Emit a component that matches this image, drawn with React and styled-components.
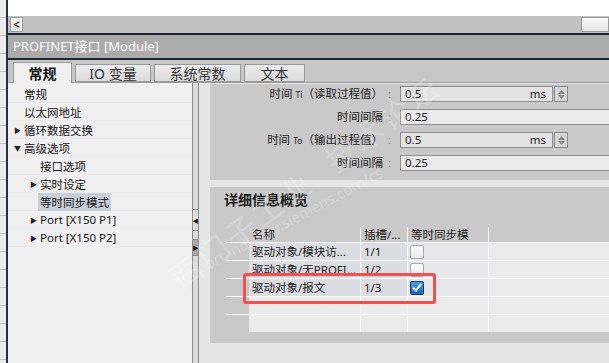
import React from 'react';
import styled, { createGlobalStyle } from 'styled-components';

const FONT = `"Noto Sans", "Noto Sans CJK SC", sans-serif`;

const Global = createGlobalStyle`
  html, body { margin: 0; padding: 0; background: #fff; }
  body { font-family: ${FONT}; }
  * { box-sizing: border-box; }
`;

const Screen = styled.div`
  position: relative;
  width: 609px;
  height: 363px;
  overflow: hidden;
  display: flex;
  font-family: ${FONT};
  color: #151515;
`;

const LeftEdge = styled.div`
  flex: none;
  width: 8px;
  background: repeating-linear-gradient(to bottom, #ececec 0 17px, #c4c4c4 17px 18px);
  border-right: 2px solid #2a2e3a;
`;

const Main = styled.div`
  flex: 1;
  min-width: 0;
  display: flex;
  flex-direction: column;
`;

const TopWhite = styled.div`
  height: 16px;
  background: #fff;
`;

const Toolbar = styled.div`
  height: 17px;
  background: #c2c2c2;
  display: flex;
  align-items: center;
  justify-content: space-between;
  padding-left: 2px;
`;

const NavButton = styled.div`
  width: ${p => p.$w}px;
  height: 15px;
  background: linear-gradient(#fafafa, #e6e6e6);
  border: 1px solid #9a9a9a;
  font-size: 12px;
  font-weight: 700;
  line-height: 12px;
  display: flex;
  align-items: center;
  justify-content: center;
  color: #222;
`;

const DarkRule = styled.div`
  height: 2px;
  background: #1e2433;
`;

const TitleBar = styled.div`
  height: 23px;
  background: #ababab;
  color: #fff;
  font-size: 13px;
  line-height: 23px;
  padding-left: 5px;
  white-space: nowrap;
`;

const TabBar = styled.div`
  height: 23px;
  background: #c7c7c7;
  display: flex;
  align-items: flex-end;
  padding-left: 5px;
  gap: 3px;
  border-bottom: 1px solid #9c9c9c;
`;

const Tab = styled.div`
  width: ${p => p.$w}px;
  height: ${p => (p.$active ? 21 : 18)}px;
  margin-bottom: ${p => (p.$active ? -1 : 0)}px;
  background: ${p => (p.$active ? '#f0f0f0' : 'linear-gradient(#ececec, #dcdcdc)')};
  border: 1px solid #9a9a9a;
  border-bottom: ${p => (p.$active ? 'none' : '1px solid #9a9a9a')};
  font-size: 14px;
  font-weight: ${p => (p.$active ? 700 : 400)};
  color: ${p => (p.$active ? '#111' : '#333')};
  display: flex;
  align-items: center;
  justify-content: center;
  white-space: nowrap;
`;

const Content = styled.div`
  flex: 1;
  display: flex;
  min-height: 0;
`;

const LeftPanel = styled.div`
  width: 184px;
  flex: none;
  background: #f0f0f0;
  padding-top: 2px;
  display: flex;
  flex-direction: column;
`;

const TreeRow = styled.div`
  height: 18px;
  display: flex;
  align-items: center;
  padding-left: ${p => 3 + p.$level * 16}px;
  font-size: 11.5px;
  white-space: nowrap;
  border-bottom: 1px solid #ebebeb;
`;

const Arrow = styled.span`
  width: 13px;
  flex: none;
  font-size: 7px;
  color: #222;
  display: flex;
  justify-content: center;
`;

const TreeLabel = styled.span`
  padding: 1px 2px;
  margin-left: -2px;
  background: ${p => (p.$selected ? '#c9cfd9' : 'transparent')};
`;

const Splitter = styled.div`
  width: 7px;
  flex: none;
  background: #dadada;
  border-left: 1px solid #8d8d8d;
  border-right: 1px solid #8d8d8d;
  display: flex;
  flex-direction: column;
  padding-top: 126px;
  gap: 8px;
`;

const SplitButton = styled.div`
  height: ${p => p.$h}px;
  background: ${p => p.$bg};
  border-top: 1px solid #8d8d8d;
  border-bottom: 1px solid #8d8d8d;
  font-size: 6px;
  display: flex;
  align-items: center;
  justify-content: center;
  color: #111;
`;

const RightArea = styled.div`
  flex: 1;
  min-width: 0;
  background: #e6e6e6;
  padding: 1px 0 0 11px;
  display: flex;
  flex-direction: column;
  gap: 7px;
`;

const ParamPanel = styled.div`
  height: 96px;
  background: #c9c9c9;
  padding-top: 2px;
  display: grid;
  grid-template-columns: 181px 1fr;
  grid-template-rows: repeat(4, 16px);
  column-gap: 9px;
  row-gap: 7px;
`;

const Label = styled.div`
  font-size: 11.5px;
  line-height: 16px;
  text-align: right;
  white-space: nowrap;
  color: #1c1c1c;
`;

const Small = styled.span`
  font-size: 8.5px;
`;

const Colon = styled.span`
  color: #8a8a8a;
  margin-left: 5px;
`;

const InputRow = styled.div`
  display: flex;
  min-width: 0;
`;

const Field = styled.div`
  width: ${p => (p.$w ? `${p.$w}px` : 'auto')};
  flex: ${p => (p.$w ? 'none' : '1')};
  height: 16px;
  background: ${p => (p.$w ? '#e3e3e3' : '#eaeaea')};
  border: 1px solid #8f8f8f;
  border-right: ${p => (p.$w ? '1px solid #8f8f8f' : 'none')};
  font-size: 11.5px;
  line-height: 14px;
  padding: 0 6px 0 4px;
  display: flex;
  justify-content: space-between;
  color: #1c1c1c;
`;

const Spinner = styled.div`
  width: 14px;
  height: 16px;
  margin-left: 1px;
  border: 1px solid #8a8a8a;
  background: #d6d6d6;
  display: flex;
  flex-direction: column;
  align-items: center;
  justify-content: center;
  gap: 1px;
`;

const DetailPanel = styled.div`
  height: 156px;
  background: #c9c9c9;
  padding: 3px 0 0 14px;
`;

const DetailTitle = styled.div`
  font-size: 14px;
  font-weight: 700;
  line-height: 20px;
  color: #1a1a1a;
  margin-bottom: 17px;
`;

const TableWrap = styled.div`
  position: relative;
  margin-left: 2px;
`;

const COLS = '23px 112px 47px 81px 1fr';

const HeadRow = styled.div`
  display: grid;
  grid-template-columns: ${COLS};
  height: 16px;
  border-bottom: 1px solid #f4f4f4;
`;

const HeadCell = styled.div`
  font-size: 11.5px;
  line-height: 15px;
  padding-left: 3px;
  white-space: nowrap;
  overflow: hidden;
  border-right: ${p => (p.$noLine ? 'none' : '1px solid #f4f4f4')};
  color: #1a1a1a;
`;

const BodyRow = styled.div`
  display: grid;
  grid-template-columns: ${COLS};
  height: ${p => p.$h || 18}px;
  border-bottom: ${p => (p.$last ? 'none' : '1px solid #fafafa')};
`;

const BodyCell = styled.div`
  background: ${p => p.$bg || '#ebebeb'};
  border-right: ${p => (p.$noLine ? 'none' : '1px solid #fafafa')};
  font-size: 11.5px;
  line-height: 17px;
  padding-left: 3px;
  white-space: nowrap;
  overflow: hidden;
  color: #1a1a1a;
  display: flex;
  align-items: center;
`;

const RowHead = styled.div``;

const Check = styled.div`
  width: 14px;
  height: 14px;
  margin-left: -1px;
  border-radius: 2px;
  border: 1px solid ${p => (p.$on ? '#1f3d66' : '#aaaaaa')};
  background: ${p => (p.$on ? 'linear-gradient(#4a9be6, #1b66bb)' : 'linear-gradient(#fbfbfb, #ececec)')};
  display: flex;
  align-items: center;
  justify-content: center;
`;

const Highlight = styled.div`
  position: absolute;
  left: 17px;
  top: 46px;
  width: 193px;
  height: 31px;
  border: 3px solid #f2504f;
  border-radius: 3px;
  pointer-events: none;
`;

const Watermark = styled.div`
  position: absolute;
  left: ${p => p.$x}px;
  top: ${p => p.$y}px;
  transform: rotate(${p => p.$r}deg);
  transform-origin: left top;
  font-size: ${p => p.$s}px;
  color: rgba(255, 255, 255, 0.24);
  white-space: nowrap;
  pointer-events: none;
  letter-spacing: ${p => p.$ls || 0}px;
`;

const Tri = ({ dir }) => (
  <svg width="7" height="4" viewBox="0 0 7 4">
    <path d={dir === 'up' ? 'M0 4 L3.5 0 L7 4 Z' : 'M0 0 L3.5 4 L7 0 Z'} fill="#8a8a8a" />
  </svg>
);

const tree = [
  { level: 1, label: '常规' },
  { level: 1, label: '以太网地址' },
  { level: 0, arrow: '▶', label: '循环数据交换' },
  { level: 0, arrow: '▼', label: '高级选项' },
  { level: 2, label: '接口选项' },
  { level: 1, arrow: '▶', label: '实时设定', sub: true },
  { level: 2, label: '等时同步模式', selected: true },
  { level: 1, arrow: '▶', label: 'Port [X150 P1]', sub: true },
  { level: 1, arrow: '▶', label: 'Port [X150 P2]', sub: true },
];

const rows = [
  { name: '驱动对象/模块访...', slot: '1/1', on: false },
  { name: '驱动对象/无PROFI...', slot: '1/2', on: false },
  { name: '驱动对象/报文', slot: '1/3', on: true },
];

export default function App() {
  return (
    <>
      <Global />
      <Screen>
        <LeftEdge />
        <Main>
          <TopWhite />
          <Toolbar>
            <NavButton $w={13}>&lt;</NavButton>
            <NavButton $w={28} />
          </Toolbar>
          <DarkRule />
          <TitleBar>PROFINET接口 [Module]</TitleBar>
          <DarkRule />
          <TabBar>
            <Tab $active $w={59}>常规</Tab>
            <Tab $w={76}>IO 变量</Tab>
            <Tab $w={87}>系统常数</Tab>
            <Tab $w={61}>文本</Tab>
          </TabBar>
          <Content>
            <LeftPanel>
              {tree.map((t, i) => {
                const lvl = t.arrow ? (t.sub ? 1 : 0) : t.level === 2 ? 1 : 0;
                return (
                  <TreeRow key={i} $level={lvl}>
                    <Arrow>{t.arrow || ''}</Arrow>
                    <TreeLabel $selected={t.selected}>{t.label}</TreeLabel>
                  </TreeRow>
                );
              })}
            </LeftPanel>
            <Splitter>
              <SplitButton $h={22} $bg="#e2e2e2">◀</SplitButton>
              <SplitButton $h={17} $bg="#a9a9a9">▶</SplitButton>
            </Splitter>
            <RightArea>
              <ParamPanel>
                <Label>
                  时间 <Small>Ti</Small>（读取过程值）<Colon>:</Colon>
                </Label>
                <InputRow>
                  <Field $w={153}>
                    <span>0.5</span>
                    <span>ms</span>
                  </Field>
                  <Spinner>
                    <Tri dir="up" />
                    <Tri dir="down" />
                  </Spinner>
                </InputRow>
                <Label>
                  时间间隔<Colon>:</Colon>
                </Label>
                <InputRow>
                  <Field>
                    <span>0.25</span>
                  </Field>
                </InputRow>
                <Label>
                  时间 <Small>To</Small>（输出过程值）<Colon>:</Colon>
                </Label>
                <InputRow>
                  <Field $w={153}>
                    <span>0.5</span>
                    <span>ms</span>
                  </Field>
                  <Spinner>
                    <Tri dir="up" />
                    <Tri dir="down" />
                  </Spinner>
                </InputRow>
                <Label>
                  时间间隔<Colon>:</Colon>
                </Label>
                <InputRow>
                  <Field>
                    <span>0.25</span>
                  </Field>
                </InputRow>
              </ParamPanel>
              <DetailPanel>
                <DetailTitle>详细信息概览</DetailTitle>
                <TableWrap>
                  <HeadRow>
                    <HeadCell $noLine />
                    <HeadCell>名称</HeadCell>
                    <HeadCell>插槽/...</HeadCell>
                    <HeadCell>等时同步模</HeadCell>
                    <HeadCell $noLine />
                  </HeadRow>
                  {rows.map((r, i) => (
                    <BodyRow key={i}>
                      <RowHead />
                      <BodyCell $bg="#dcdce3">{r.name}</BodyCell>
                      <BodyCell $bg="#dcdce3">{r.slot}</BodyCell>
                      <BodyCell $bg="#e7e7e9">
                        <Check $on={r.on}>
                          {r.on && (
                            <svg width="10" height="9" viewBox="0 0 10 9">
                              <path d="M1 4.5 L4 7.5 L9 1" stroke="#fff" strokeWidth="2" fill="none" />
                            </svg>
                          )}
                        </Check>
                      </BodyCell>
                      <BodyCell $noLine />
                    </BodyRow>
                  ))}
                  <BodyRow>
                    <RowHead />
                    <BodyCell />
                    <BodyCell />
                    <BodyCell />
                    <BodyCell $noLine />
                  </BodyRow>
                  <BodyRow $h={17} $last>
                    <RowHead />
                    <BodyCell />
                    <BodyCell />
                    <BodyCell />
                    <BodyCell $noLine />
                  </BodyRow>
                  <Highlight />
                </TableWrap>
              </DetailPanel>
            </RightArea>
          </Content>
        </Main>
        <Watermark $x={160} $y={262} $r={-37} $s={30} $ls={4}>西门子工业&nbsp;&nbsp;技术论坛</Watermark>
        <Watermark $x={170} $y={272} $r={-28} $s={15}>support.industry.siemens.com/cs</Watermark>
      </Screen>
    </>
  );
}
